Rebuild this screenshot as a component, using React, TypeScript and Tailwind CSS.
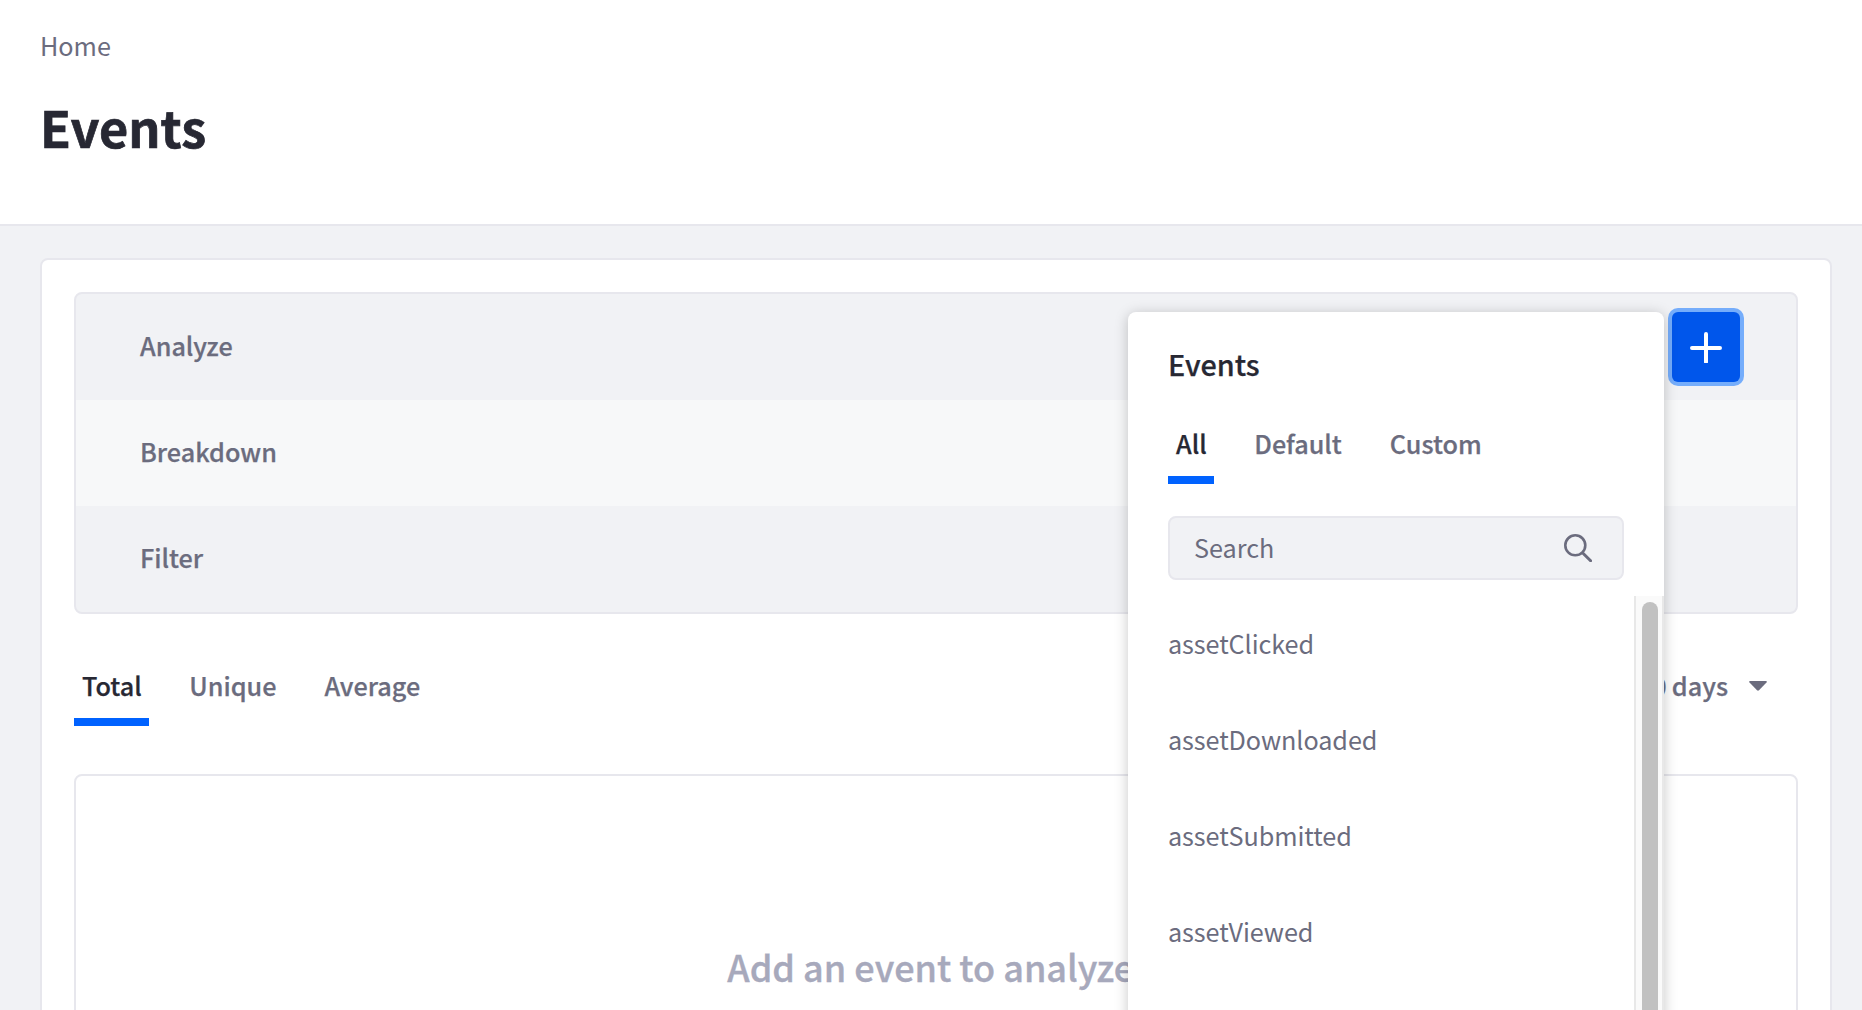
import React from "react";

const events = ["assetClicked", "assetDownloaded", "assetSubmitted", "assetViewed"];

function Tabs({ items }: { items: string[] }) {
  return (
    <div className="flex gap-8">
      {items.map((item, i) => (
        <button
          key={item}
          className={
            i === 0
              ? "flex h-[64px] flex-col items-center justify-start border-b-8 border-[#0062ff] pr-[7.6px] pl-2 pt-1 text-[25.2px] leading-[38px] font-medium text-[#272833] [-webkit-text-stroke:0.25px]"
              : "flex h-[64px] flex-col items-center justify-start border-b-8 border-transparent px-2 pt-1 text-[25.2px] leading-[38px] font-medium text-[#6b6c7e] [-webkit-text-stroke:0.25px]"
          }
        >
          {item}
        </button>
      ))}
    </div>
  );
}

function EventPicker() {
  return (
    <div className="absolute top-[18px] left-[1052px] h-[900px] w-[536px] rounded-lg bg-white pt-[34px] font-normal shadow-[0_2px_14px_rgba(0,0,0,0.22)] [-webkit-text-stroke:0]">
      <div className="px-10">
        <h2 className="text-[28.8px] leading-[36px] font-medium text-[#272833] [-webkit-text-stroke:0.25px]">Events</h2>
        <div className="mt-[38px]">
          <Tabs items={["All", "Default", "Custom"]} />
        </div>
        <div className="mt-8 flex h-16 items-center justify-between rounded-lg border-2 border-[#e7e7ed] bg-[#f1f2f5] pr-[30px] pl-6">
          <span className="pb-[3px] text-[25.2px] leading-[36px] text-[#6b6c7e]">Search</span>
          <svg width="28" height="28" viewBox="0 0 28 28" fill="none" stroke="#6b6c7e" strokeLinecap="round">
            <circle cx="11.3" cy="11.3" r="10" strokeWidth="2.6" />
            <path d="M19 19.2L26.6 26.8" strokeWidth="3" />
          </svg>
        </div>
      </div>
      <div className="mt-4 flex h-[600px] justify-between">
        <ul className="pl-10">
          {events.map((event) => (
            <li key={event} className="flex h-24 items-center pb-0.5 text-[25.2px] leading-[36px] tracking-[-0.07px] text-[#6b6c7e]">
              {event}
            </li>
          ))}
        </ul>
        <div className="w-[30px] border-x-2 border-[#e8e8e8] bg-[#fafafa] pt-1.5 pl-1.5">
          <div className="h-full w-4 rounded-full bg-[#c1c1c1]" />
        </div>
      </div>
    </div>
  );
}

export default function App() {
  return (
    <div className="flex h-[1010px] w-[1862px] flex-col overflow-hidden bg-[#f1f2f5] font-['Noto_Sans_CJK_SC','Open_Sans',sans-serif]">
      <header className="h-[226px] shrink-0 border-b-2 border-[#e7e7ed] bg-white px-10 pt-[27px]">
        <a className="block text-[25.2px] leading-[36px] text-[#6b6c7e]">Home</a>
        <h1 className="mt-[34px] text-[50.4px] leading-[60px] font-bold text-[#272833] [-webkit-text-stroke:0.7px]">Events</h1>
      </header>
      <main className="mx-10 mt-8 h-[1000px] w-[1792px] shrink-0 rounded-lg border-2 border-[#e7e7ed] bg-white p-8">
        <section className="relative z-10 rounded-lg border-2 border-[#e7e7ed] bg-[#f1f2f5] text-[25.2px] leading-[36px] font-medium text-[#6b6c7e] [-webkit-text-stroke:0.25px]">
          <div className="flex h-[106px] items-center justify-between pr-14 pl-16">
            <span className="pb-1">Analyze</span>
            <button className="flex h-[70px] w-[68px] items-center justify-center rounded-[6px] bg-[#0056eb] ring-4 ring-[#75adfb]">
              <svg width="32" height="32" viewBox="0 0 32 32" stroke="#fff" strokeWidth="4" strokeLinecap="round">
                <path d="M2 17H30M16 3V31" />
              </svg>
            </button>
          </div>
          <div className="flex h-[106px] items-center bg-[#f7f8f9] pl-16">
            <span className="pb-1">Breakdown</span>
          </div>
          <div className="flex h-[106px] items-center pl-16">
            <span className="pb-1">Filter</span>
          </div>
          <EventPicker />
        </section>
        <div className="mt-12 flex justify-between">
          <Tabs items={["Total", "Unique", "Average"]} />
          <button className="flex h-[48px] items-center gap-[21px] pr-[31px] text-[25.2px] leading-[38px] font-medium text-[#6b6c7e] [-webkit-text-stroke:0.25px]">
            <span className="pb-0.5 [word-spacing:-0.5px]">Last 30 days</span>
            <svg width="18" height="10" viewBox="0 0 18 10" fill="#6b6c7e">
              <path d="M1 0H17Q18.4 .4 17.5 1.5L10 9.3Q9 10.2 8 9.3L.5 1.5Q-.4 .4 1 0Z" />
            </svg>
          </button>
        </div>
        <section className="mt-12 flex h-[500px] justify-center rounded-lg border-2 border-[#e7e7ed] bg-white pt-[163px]">
          <p className="text-[36px] leading-[54px] font-medium text-[#a7a9bc] [-webkit-text-stroke:0.35px]">Add an event to analyze.</p>
        </section>
      </main>
    </div>
  );
}
